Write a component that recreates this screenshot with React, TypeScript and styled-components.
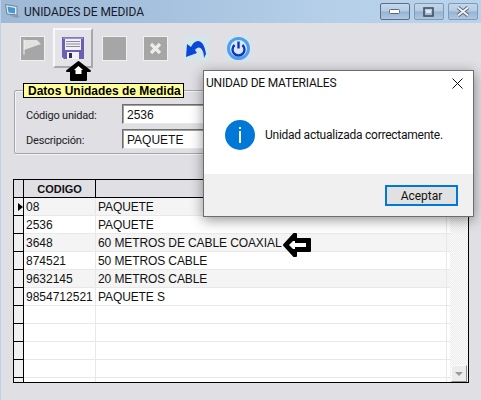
import React from "react";
import styled, { createGlobalStyle } from "styled-components";

const Global = createGlobalStyle`
  html, body { margin: 0; padding: 0; background: #dfdfe4; overflow: hidden; }
  * { box-sizing: border-box; }
`;

const Win = styled.div`
  position: relative;
  width: 481px;
  height: 400px;
  overflow: hidden;
  background: #dfdfe4;
  border-left: 1px solid #b9d1ea;
  display: flex;
  flex-direction: column;
  font-family: "Liberation Sans", Arial, sans-serif;
`;

const TitleBar = styled.div`
  height: 23px;
  flex: none;
  display: flex;
  align-items: center;
  padding: 0 3px 0 3px;
  background: linear-gradient(90deg, #9db9d6 0%, #a6c2de 35%, #b6d0ea 70%, #b9d3ec 100%);
`;

const WinTitle = styled.span`
  margin-left: 3px;
  flex: 1;
  font: 12px Roboto, sans-serif;
  letter-spacing: -0.1px;
  color: #1a1a2a;
`;

const CtrlRow = styled.div`
  display: flex;
  gap: 4px;
  align-self: flex-start;
  margin-top: 3px;
`;

const Ctrl = styled.div<{ $active?: boolean }>`
  width: 30px;
  height: 17px;
  border: 1px solid ${p => (p.$active ? "#5d6f85" : "#7f9ab6")};
  border-radius: 2px;
  background: linear-gradient(180deg, #c4d7eb 0%, #b4cbe3 48%, #95b3d2 52%, #afc8e1 100%);
  display: flex;
  align-items: center;
  justify-content: center;
`;

const Toolbar = styled.div`
  height: 40px;
  margin-top: 5px;
  flex: none;
  display: flex;
  align-items: center;
  padding-left: 19px;
`;

const ToolSlot = styled.div<{ $gap: number }>`
  margin-right: ${p => p.$gap}px;
  display: flex;
`;

const SaveBtn = styled.div`
  width: 40px;
  height: 40px;
  margin: 0 9px 0 8px;
  background: #e4e4e8;
  border: 2px solid;
  border-color: #f8f8f8 #a8a8a8 #a8a8a8 #f8f8f8;
  display: flex;
  align-items: center;
  justify-content: center;
`;

const Group = styled.fieldset`
  margin: 15px 0 0 13px;
  width: 400px;
  height: 71px;
  flex: none;
  padding: 0 0 0 11px;
  border: 1px solid #a5a5ab;
  box-shadow: inset 1px 1px 0 #f4f4f4, 1px 1px 0 #f4f4f4;
  border-radius: 2px;
  display: block;
`;

const Legend = styled.legend`
  margin-left: -3px;
  padding: 0 4px;
  height: 15px;
  width: 161px;
  line-height: 14px;
  background: #ffff99;
  border: 1px solid #000;
  font-size: 12px;
  font-weight: 700;
  white-space: nowrap;
  color: #000;
`;

const FieldRow = styled.div<{ $top: number }>`
  display: flex;
  align-items: center;
  height: 20px;
  margin-top: ${p => p.$top}px;
`;

const FieldLabel = styled.label`
  width: 96px;
  padding-top: 3px;
  font: 11px Roboto, sans-serif;
  letter-spacing: -0.2px;
  color: #222;
`;

const FieldInput = styled.div`
  width: 280px;
  height: 20px;
  background: #fff;
  border: 1px solid;
  border-color: #6e6e6e #e8e8e8 #e8e8e8 #6e6e6e;
  box-shadow: inset 1px 1px 0 #a0a0a0;
  padding: 3px 0 0 4px;
  font-size: 12px;
  color: #111;
  line-height: 15px;
`;

const Grid = styled.div`
  margin: 25px 0 0 12px;
  width: 456px;
  height: 204px;
  flex: none;
  border: 1px solid #000;
  background: #fff;
  display: flex;
  overflow: hidden;
`;

const GridMain = styled.div`
  width: 436px;
  flex: none;
`;

const HeaderRow = styled.div`
  display: flex;
  height: 18px;
  background: #dfdfe4;
  border-bottom: 1px solid #000;
`;

const IndCell = styled.div<{ $header?: boolean }>`
  width: 10px;
  flex: none;
  background: ${p => (p.$header ? "#dfdfe4" : "#f0f0f0")};
  border-right: 1px solid #000;
  display: flex;
  align-items: center;
`;

const HeadCode = styled.div`
  width: 72px;
  flex: none;
  border-right: 1px solid #000;
  padding-top: 2px;
  text-align: center;
  font-size: 11px;
  font-weight: 700;
  line-height: 14px;
  color: #111;
`;

const Row = styled.div<{ $alt: boolean }>`
  display: flex;
  height: 18px;
  background: ${p => (p.$alt ? "#f4f4f4" : "#fff")};
  border-bottom: 1px solid #e8e8e8;
  font-size: 12px;
  line-height: 15px;
  color: #111;
`;

const RowInd = styled(IndCell)`
  height: 18px;
  border-bottom: 1px solid #000;
`;

const CodeCell = styled.div`
  width: 72px;
  flex: none;
  padding: 2px 0 0 2px;
  border-right: 1px solid #e8e8e8;
  white-space: nowrap;
  overflow: hidden;
`;

const DescCell = styled.div`
  width: 351px;
  flex: none;
  padding: 2px 0 0 2px;
  border-right: 1px solid #e8e8e8;
  letter-spacing: -0.1px;
  white-space: nowrap;
`;

const Triangle = styled.div`
  width: 0;
  height: 0;
  margin-left: 4px;
  border-left: 5px solid #000;
  border-top: 4px solid transparent;
  border-bottom: 4px solid transparent;
`;

const Scroll = styled.div`
  flex: 1;
  display: flex;
  flex-direction: column;
  justify-content: flex-end;
  align-items: flex-end;
  padding-right: 1px;
  background: repeating-conic-gradient(#ececec 0 25%, #fbfbfb 0 50%) 0 0 / 2px 2px;
`;

const ScrollBtn = styled.div`
  width: 16px;
  height: 17px;
  background: #ececec;
  border: 1px solid;
  border-color: #fafafa #8f8f8f #8f8f8f #fafafa;
  display: flex;
  align-items: center;
  justify-content: center;
`;

const ScrollArrow = styled.div`
  width: 0;
  height: 0;
  border-top: 4px solid #9a9a9a;
  border-left: 4px solid transparent;
  border-right: 4px solid transparent;
`;

const Dialog = styled.div`
  position: absolute;
  left: 202px;
  top: 70px;
  width: 271px;
  height: 147px;
  background: #fff;
  border: 1px solid #6d6d6d;
  box-shadow: 0 3px 12px rgba(0, 0, 0, 0.42);
  display: flex;
  flex-direction: column;
`;

const DlgTitle = styled.div`
  height: 24px;
  flex: none;
  display: flex;
  align-items: center;
  justify-content: space-between;
  padding: 0 10px 0 2px;
  font: 12px Roboto, sans-serif;
  letter-spacing: -0.2px;
  color: #111;
`;

const DlgBody = styled.div`
  flex: 1;
  display: flex;
  align-items: center;
  gap: 10px;
  padding: 0 0 0 21px;
  font: 12px Roboto, sans-serif;
  letter-spacing: -0.25px;
  color: #111;
`;

const DlgFoot = styled.div`
  height: 42px;
  flex: none;
  background: #f0f0f0;
  display: flex;
  align-items: flex-start;
  justify-content: flex-end;
  padding: 11px 15px 0 0;
`;

const DlgBtn = styled.button`
  width: 73px;
  height: 21px;
  padding: 0;
  background: #e1e1e1;
  border: 2px solid #0078d7;
  font: 12px Roboto, sans-serif;
  color: #111;
`;

const Pointer = styled.svg<{ $x: number; $y: number }>`
  position: absolute;
  left: ${p => p.$x}px;
  top: ${p => p.$y}px;
`;

const Gray = ({ children }: { children?: React.ReactNode }) => (
  <svg width="25" height="25" viewBox="0 0 25 25">
    <rect x="0.5" y="0.5" width="24" height="24" fill="#a6a6a6" stroke="#f0f0f0" />
    {children}
  </svg>
);

const rows: [string, string][] = [
  ["08", "PAQUETE"],
  ["2536", "PAQUETE"],
  ["3648", "60 METROS DE CABLE COAXIAL"],
  ["874521", "50 METROS CABLE"],
  ["9632145", "20 METROS CABLE"],
  ["9854712521", "PAQUETE S"],
  ["", ""],
  ["", ""],
  ["", ""],
  ["", ""],
  ["", ""],
];

export default function App() {
  return (
    <Win>
      <Global />
      <TitleBar>
        <svg width="17" height="17" viewBox="0 0 17 17">
          <path d="M1.5 1.5 L13 3.5 V12 L3 11 Z" fill="#e4edf5" stroke="#6d7f92" />
          <path d="M3.5 3.5 L11 5 V10.4 L4.5 9.6 Z" fill="#3f9ad6" />
          <path d="M5 12.5 L13 15 L16 13 L12 12 Z" fill="#8c9aa8" />
        </svg>
        <WinTitle>UNIDADES DE MEDIDA</WinTitle>
        <CtrlRow>
          <Ctrl $active>
            <svg width="12" height="6" viewBox="0 0 12 6">
              <rect x="0.5" y="0.5" width="10" height="4" rx="1" fill="#fff" stroke="#5a6a7c" />
            </svg>
          </Ctrl>
          <Ctrl>
            <svg width="12" height="10" viewBox="0 0 12 10">
              <rect x="1" y="1" width="9" height="8" fill="none" stroke="#44505e" strokeWidth="1.6" />
              <rect x="3" y="3" width="5" height="3" fill="#dfe8f1" />
            </svg>
          </Ctrl>
          <Ctrl>
            <svg width="14" height="11" viewBox="0 0 14 11">
              <path d="M2 1.5 L12 9.5 M12 1.5 L2 9.5" stroke="#55606c" strokeWidth="3.6" />
              <path d="M2 1.5 L12 9.5 M12 1.5 L2 9.5" stroke="#f0f3f6" strokeWidth="2" />
            </svg>
          </Ctrl>
        </CtrlRow>
      </TitleBar>

      <Toolbar>
        <ToolSlot $gap={0}>
          <Gray>
            <path d="M4 4 H17 L21 8 L4 14 Z" fill="#e2e2e2" />
            <rect x="3.5" y="3.5" width="1" height="15" fill="#f2f2f2" />
          </Gray>
        </ToolSlot>
        <SaveBtn>
          <svg width="24" height="24" viewBox="0 0 24 24">
            <path d="M1 1 H23 V23 H3 L1 21 Z" fill="#6a5fb0" />
            <rect x="2" y="1.5" width="20" height="1.5" fill="#9a92d8" />
            <rect x="4" y="3" width="16" height="11" fill="#f0f0f4" />
            <path d="M5 5.5 H19 M5 8 H19 M5 10.5 H19" stroke="#8a8a96" />
            <rect x="6" y="16" width="12" height="7" fill="#f2f2f6" />
            <rect x="8" y="17" width="3" height="5" fill="#2f2a60" />
          </svg>
        </SaveBtn>
        <ToolSlot $gap={16}>
          <Gray />
        </ToolSlot>
        <ToolSlot $gap={16}>
          <Gray>
            <path d="M8 8 L17 17 M17 8 L8 17" stroke="#ececec" strokeWidth="3.2" />
          </Gray>
        </ToolSlot>
        <ToolSlot $gap={17}>
          <svg width="25" height="25" viewBox="0 0 25 25">
            <rect width="25" height="25" fill="#d5e6ea" />
            <path d="M7 11 C11 2 20 2 22 18 L20 22 C20 13 15 8 11 14 L13 17 L2 21 L3 8 Z" fill="#0a48d8" />
          </svg>
        </ToolSlot>
        <svg width="25" height="25" viewBox="0 0 25 25">
          <rect width="25" height="25" fill="#d5e6ea" />
          <circle cx="12.5" cy="12.5" r="11.5" fill="#4f9df0" />
          <circle cx="12.5" cy="12.5" r="8.5" fill="#dbe9fa" />
          <path d="M8.6 9 A6 6 0 1 0 16.4 9" fill="none" stroke="#0c36c0" strokeWidth="2.4" />
          <rect x="11.3" y="5.5" width="2.4" height="7" fill="#0c36c0" />
        </svg>
      </Toolbar>

      <Group>
        <Legend>Datos Unidades de Medida</Legend>
        <FieldRow $top={6}>
          <FieldLabel>Código unidad:</FieldLabel>
          <FieldInput>2536</FieldInput>
        </FieldRow>
        <FieldRow $top={5}>
          <FieldLabel>Descripción:</FieldLabel>
          <FieldInput>PAQUETE</FieldInput>
        </FieldRow>
      </Group>

      <Grid>
        <GridMain>
          <HeaderRow>
            <IndCell $header />
            <HeadCode>CODIGO</HeadCode>
          </HeaderRow>
          {rows.map(([code, desc], i) => (
            <Row key={i} $alt={i < 6 && i % 2 === 0}>
              <RowInd>{i === 0 && <Triangle />}</RowInd>
              <CodeCell>{code}</CodeCell>
              <DescCell>{desc}</DescCell>
            </Row>
          ))}
        </GridMain>
        <Scroll>
          <ScrollBtn>
            <ScrollArrow />
          </ScrollBtn>
        </Scroll>
      </Grid>

      <Pointer $x={64} $y={60} width="28" height="22" viewBox="0 0 28 22">
        <path d="M13.5 2 L25 11 H21 V20 H6 V11 H2 Z" fill="#000" stroke="#000" strokeWidth="2" strokeLinejoin="round" />
        <path d="M13.5 6 L18 10 H16.5 V14 H10.5 V10 H9 Z" fill="#fff" />
      </Pointer>
      <Pointer $x={280} $y={232} width="32" height="27" viewBox="0 0 32 27">
        <path d="M3 13 L13 2 H15 V7 H29 V19 H15 V24 H13 Z" fill="#000" stroke="#000" strokeWidth="2" strokeLinejoin="round" />
        <path d="M8 13 L12 9 H14 V11 H25 V15 H14 V17 H12 Z" fill="#fff" />
      </Pointer>

      <Dialog>
        <DlgTitle>
          UNIDAD DE MATERIALES
          <svg width="11" height="11" viewBox="0 0 11 11">
            <path d="M0.5 0.5 L10.5 10.5 M10.5 0.5 L0.5 10.5" stroke="#111" strokeWidth="1" />
          </svg>
        </DlgTitle>
        <DlgBody>
          <svg width="30" height="30" viewBox="0 0 30 30">
            <circle cx="15" cy="15" r="15" fill="#0078d7" />
            <rect x="14" y="7" width="2" height="2" fill="#fff" />
            <rect x="14" y="11" width="2" height="12" fill="#fff" />
          </svg>
          Unidad actualizada correctamente.
        </DlgBody>
        <DlgFoot>
          <DlgBtn>Aceptar</DlgBtn>
        </DlgFoot>
      </Dialog>
    </Win>
  );
}
